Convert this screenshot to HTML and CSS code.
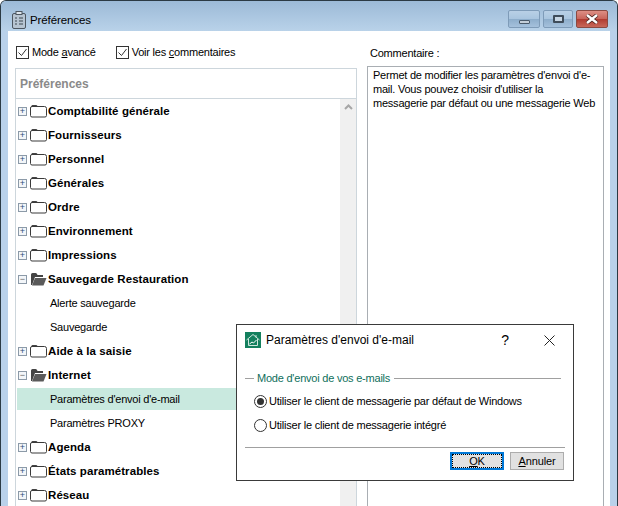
FILE: index.html
```html
<!DOCTYPE html>
<html lang="fr">
<head>
<meta charset="utf-8">
<title>Préférences</title>
<link rel="stylesheet" href="styles.css">
</head>
<body>
<svg class="defs" width="0" height="0">
  <symbol id="closed" viewBox="0 0 17 14"><path d="M1.500 3V2q0-1 1-1h3.500q1 0 1.500 1l.5 1z" fill="#444"/><path d="M.5 11.500V4q0-1.500 1.500-1.500h12.500q2 0 2 2v7q0 1.500-1.500 1.500H2q-1.500 0-1.500-1.500z" fill="#fff" stroke="#3a3a3a"/></symbol>
  <symbol id="open" viewBox="0 0 17 14"><path d="M1 13V2.500q0-1.500 1.500-1.500h3q1 0 1.500 1l.5 1H13v2H5L2 13z" fill="#444"/><path d="M5 6h11.500L13.500 13.500H2z" fill="#5a5a5a"/></symbol>
</svg>
<div class="window">
  <header class="titlebar">
    <svg class="app-icon" width="14" height="18" viewBox="0 0 14 18"><rect x=".5" y="2.500" width="13" height="15" rx="1.500" fill="#b7c4d1" stroke="#4d5660"/><rect x="4" y=".5" width="6" height="3" fill="#dfe6ec" stroke="#4d5660"/><path d="M3 7h2M7 7h4M3 10h2M7 10h4M3 13h2M7 13h4" stroke="#3d4650" stroke-width="1.200"/></svg>
    <span class="title">Préférences</span>
    <div class="controls">
      <div class="ctl"><span class="min-glyph"></span></div>
      <div class="ctl max"><span class="max-glyph"></span></div>
      <div class="ctl close"><svg width="16" height="10" viewBox="0 0 16 10"><path d="M3 1l10 8M13 1L3 9" stroke="#4a2420" stroke-width="4"/><path d="M3 1l10 8M13 1L3 9" stroke="#fff" stroke-width="2.400"/></svg></div>
    </div>
  </header>
  <main class="client">
    <section class="left">
      <div class="checks">
        <label class="check"><svg class="box" width="13" height="13" viewBox="0 0 13 13"><rect x=".5" y=".5" width="12" height="12" fill="#fff" stroke="#333"/><path d="M2.500 6.500l3 3 5-6.500" fill="none" stroke="#333"/></svg><span>Mode <u>a</u>vancé</span></label>
        <label class="check"><svg class="box" width="13" height="13" viewBox="0 0 13 13"><rect x=".5" y=".5" width="12" height="12" fill="#fff" stroke="#333"/><path d="M2.500 6.500l3 3 5-6.500" fill="none" stroke="#333"/></svg><span>Voir les <u>c</u>ommentaires</span></label>
      </div>
      <div class="tree-panel">
        <div class="tree-head">Préférences</div>
        <div class="tree-body">
          <ul class="tree">
            <li class="row top"><span class="exp">+</span><svg class="folder"><use href="#closed"/></svg><span>Comptabilité générale</span></li>
            <li class="row top"><span class="exp">+</span><svg class="folder"><use href="#closed"/></svg><span>Fournisseurs</span></li>
            <li class="row top"><span class="exp">+</span><svg class="folder"><use href="#closed"/></svg><span>Personnel</span></li>
            <li class="row top"><span class="exp">+</span><svg class="folder"><use href="#closed"/></svg><span>Générales</span></li>
            <li class="row top"><span class="exp">+</span><svg class="folder"><use href="#closed"/></svg><span>Ordre</span></li>
            <li class="row top"><span class="exp">+</span><svg class="folder"><use href="#closed"/></svg><span>Environnement</span></li>
            <li class="row top"><span class="exp">+</span><svg class="folder"><use href="#closed"/></svg><span>Impressions</span></li>
            <li class="row top"><span class="exp minus">−</span><svg class="folder"><use href="#open"/></svg><span>Sauvegarde Restauration</span></li>
            <li class="row sub">Alerte sauvegarde</li>
            <li class="row sub">Sauvegarde</li>
            <li class="row top"><span class="exp">+</span><svg class="folder"><use href="#closed"/></svg><span>Aide à la saisie</span></li>
            <li class="row top"><span class="exp minus">−</span><svg class="folder"><use href="#open"/></svg><span>Internet</span></li>
            <li class="row sub selected">Paramètres d'envoi d'e-mail</li>
            <li class="row sub">Paramètres PROXY</li>
            <li class="row top"><span class="exp">+</span><svg class="folder"><use href="#closed"/></svg><span>Agenda</span></li>
            <li class="row top"><span class="exp">+</span><svg class="folder"><use href="#closed"/></svg><span>États paramétrables</span></li>
            <li class="row top"><span class="exp">+</span><svg class="folder"><use href="#closed"/></svg><span>Réseau</span></li>
          </ul>
          <div class="scrollbar"><svg width="9" height="6" viewBox="0 0 9 6"><path d="M1 5l3.500-3.500L8 5" fill="none" stroke="#a6a6a6" stroke-width="2"/></svg></div>
        </div>
      </div>
    </section>
    <section class="right">
      <div class="comment-label">Commentaire :</div>
      <div class="comment-box">Permet de modifier les paramètres d'envoi d'e-mail. Vous pouvez choisir d'utiliser la messagerie par défaut ou une messagerie Web</div>
    </section>
  </main>
</div>

<div class="dialog">
  <div class="dlg-title">
    <svg class="dlg-icon" width="16" height="16" viewBox="0 0 16 16"><rect width="16" height="16" fill="#14805e"/><path d="M1.500 8L8 2.500 14.500 8M3.500 7v6.500h9V7M11 3v2.500" fill="none" stroke="#cfe8de"/><path d="M4.500 12l2.500-2 1.500 1 3-3" fill="none" stroke="#fff"/></svg>
    <span class="dlg-name">Paramètres d'envoi d'e-mail</span>
    <span class="dlg-help">?</span>
    <svg class="dlg-close" width="11" height="11" viewBox="0 0 11 11"><path d="M.5.500l10 10M10.500.500l-10 10" stroke="#222" stroke-width="1"/></svg>
  </div>
  <div class="dlg-body">
    <div class="legend"><span class="legend-dash"></span><span class="legend-text">Mode d'envoi de vos e-mails</span><span class="legend-line"></span></div>
    <div class="radio"><span class="dot on"></span>Utiliser le client de messagerie par défaut de Windows</div>
    <div class="radio"><span class="dot"></span>Utiliser le client de messagerie intégré</div>
  </div>
  <div class="dlg-foot">
    <button class="btn default"><u>O</u>K</button>
    <button class="btn"><u>A</u>nnuler</button>
  </div>
</div>
</body>
</html>
```

FILE: styles.css
```css
* { box-sizing: border-box; }
html, body { margin: 0; padding: 0; height: 506px; overflow: hidden; background: #fff; }
body { font-family: "Liberation Sans", Arial, sans-serif; font-size: 11px; letter-spacing: -0.22px; color: #000; position: relative; }
.defs { position: absolute; }

.window {
  height: 506px; width: 618px; display: flex; flex-direction: column;
  background: #b9d1ea; border-top: 1px solid #2b3a44; border-right: 1px solid #2b3a44; border-left: 1px solid #2b3a44;
  border-radius: 6px 6px 0 0; overflow: hidden;
}
.titlebar {
  height: 30px; flex: none; display: flex; align-items: center; padding: 7px 9px 0 11px;
  background: linear-gradient(#9cbad7, #b9d2e9);
}
.app-icon { flex: none; }
.title { margin-left: 4px; font-size: 11.500px; letter-spacing: -0.1px; color: #000; }
.controls { margin-left: auto; display: flex; gap: 3px; align-self: flex-start; margin-top: 2px; }
.ctl {
  width: 32px; height: 18px; display: flex; align-items: center; justify-content: center;
  border: 1px solid #7e9bb8; border-radius: 2px;
  background: linear-gradient(#b9d0e6 0, #a9c5df 50%, #8dadcb 51%, #a5c1dc 100%);
}
.ctl.max { width: 30px; }
.ctl.close { border-color: #8a4a42; background: linear-gradient(#dd8f85 0, #c8645a 50%, #b03b30 51%, #c8685a 100%); }
.min-glyph { width: 11px; height: 4px; margin-top: 6px; background: #c4ced8; border: 1px solid #4a5a6a; border-radius: 1px; }
.max-glyph { width: 11px; height: 8px; border: 2px solid #3f4c5a; background: #c7d6e4; border-radius: 1px; }

.client {
  flex: 1; min-height: 0; margin: 0 7px; background: #fff; display: flex; padding: 0 6px 0 7px;
}
.left { width: 342px; flex: none; display: flex; flex-direction: column; }
.checks { height: 37px; flex: none; display: flex; gap: 20px; padding: 14px 0 0 1px; }
.check { display: flex; align-items: center; height: 14px; gap: 3px; line-height: 14px; }
.box { flex: none; }

.tree-panel { flex: 1; min-height: 0; border: 1px solid #cdd6dc; border-bottom: 0; display: flex; flex-direction: column; }
.tree-head { height: 30px; flex: none; border-bottom: 1px solid #cdd6dc; padding-left: 4px; line-height: 31px; font-weight: bold; color: #8a8a8a; font-size: 12px; letter-spacing: 0; }
.tree-body { flex: 1; min-height: 0; display: flex; overflow: hidden; }
.tree { flex: 1; margin: 0; padding: 0; list-style: none; min-width: 0; }
.row { height: 24px; display: flex; align-items: center; white-space: nowrap; }
.row.top { font-weight: bold; font-size: 11.500px; letter-spacing: 0.08px; padding-left: 2px; }
.row.sub { padding-left: 34px; }
.row.selected { margin-left: 1px; padding-left: 33px; background: linear-gradient(#fff 1px, #c9e9df 1px, #c9e9df 23px, #fff 23px); }
.exp {
  width: 9px; height: 9px; flex: none; border: 1px solid #8c9aa8; background: #f3f6f9; color: #31507a;
  font-size: 9px; line-height: 7px; text-align: center; font-weight: normal; margin-right: 3px;
}
.exp.minus { color: #666; }
.folder { flex: none; width: 17px; height: 14px; margin-right: 1px; }
.scrollbar { width: 16px; flex: none; background: #f0f0f0; display: flex; justify-content: center; padding-top: 5px; align-items: flex-start; }

.right { flex: 1; display: flex; flex-direction: column; margin-left: 10px; min-width: 0; }
.comment-label { height: 35px; flex: none; padding: 15px 0 0 3px; line-height: 14px; }
.comment-box { flex: 1; border: 1px solid #a9aeb3; border-bottom: 0; padding: 1px 4px 0 5px; line-height: 14px; }

.dialog {
  position: absolute; left: 236px; top: 324px; width: 338px; height: 157px;
  background: #fff; border: 1px solid #3a3a3a; display: flex; flex-direction: column;
}
.dlg-title { height: 30px; flex: none; display: flex; align-items: center; padding: 0 18px 0 8px; }
.dlg-icon { flex: none; }
.dlg-name { margin-left: 5px; font-size: 12px; letter-spacing: 0; }
.dlg-help { margin-left: auto; margin-right: 35px; font-size: 14px; letter-spacing: 0; }
.dlg-close { flex: none; }
.dlg-body { flex: 1; padding: 16px 12px 0 8px; }
.legend { display: flex; align-items: center; height: 14px; margin-bottom: 4px; }
.legend-dash { width: 9px; height: 1px; background: #a0a0a0; }
.legend-text { padding: 0 4px 0 3px; color: #0f6f5c; line-height: 14px; }
.legend-line { flex: 1; height: 1px; background: #a0a0a0; }
.radio { height: 24px; display: flex; align-items: center; padding-left: 9px; }
.dot {
  width: 13px; height: 13px; border: 1px solid #333; border-radius: 50%; background: #fff; margin-right: 2px; flex: none; position: relative;
}
.dot.on::after { content: ""; position: absolute; left: 2px; top: 2px; width: 7px; height: 7px; border-radius: 50%; background: #333; }
.dlg-foot { height: 33px; flex: none; margin: 0 8px; border-top: 1px solid #a0a0a0; display: flex; justify-content: flex-end; gap: 6px; padding: 4px 1px 0 0; }
.btn {
  width: 54px; height: 18px; padding: 0; background: #e1e1e1; border: 1px solid #adadad; font: 11px/14px "Liberation Sans", Arial, sans-serif; letter-spacing: -0.1px; color: #000;
}
.btn.default { border: 2px solid #0078d7; outline: 1px dotted #000; outline-offset: -3px; }
```
